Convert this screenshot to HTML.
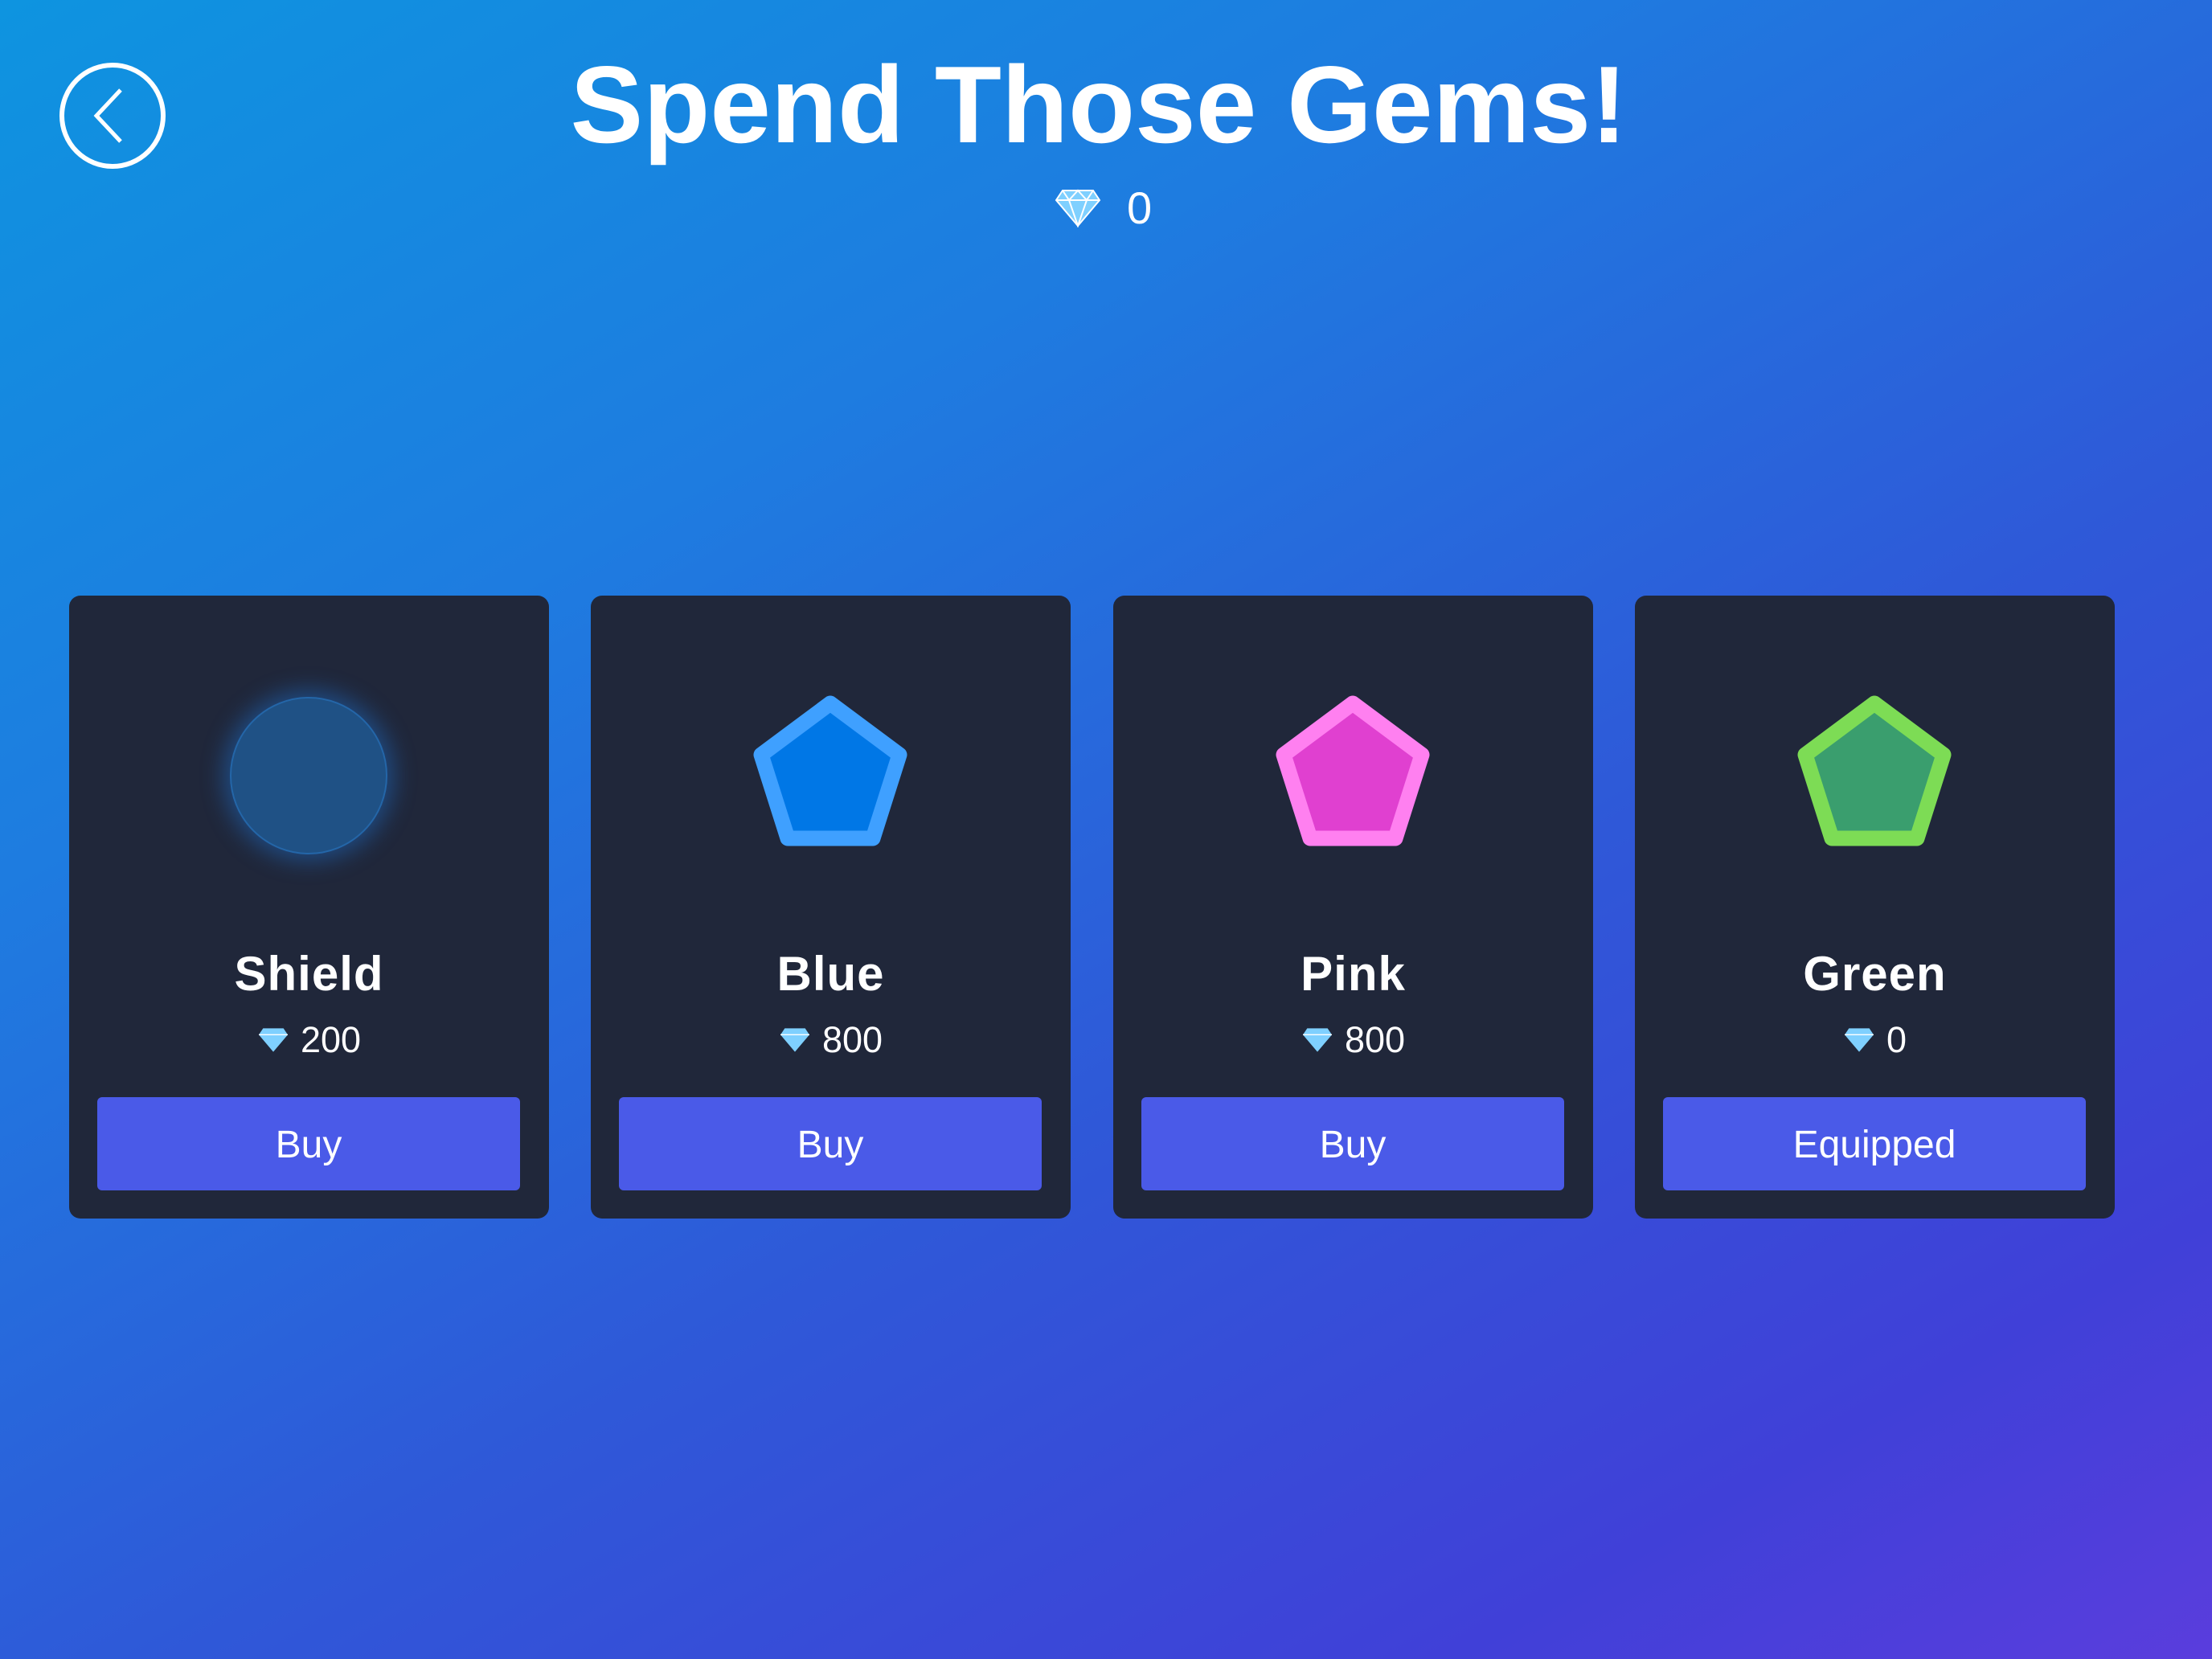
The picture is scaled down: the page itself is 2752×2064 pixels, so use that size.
<!DOCTYPE html>
<html><head><style>
body{margin:0;width:2752px;height:2064px;overflow:hidden;font-family:"Liberation Sans",sans-serif;
background:linear-gradient(150deg,#0e94e0 0%,#1e7ce0 30%,#2f58d8 60%,#4040d8 85%,#5a3ddd 100%);position:relative;color:#fff}
.back{position:absolute;left:74px;top:78px;width:120px;height:120px;border:6px solid #fff;border-radius:50%}
h1{position:absolute;left:0;width:2734px;top:52px;margin:0;text-align:center;font-size:136px;font-weight:bold;letter-spacing:0}
.count{position:absolute;left:1312px;top:226px;font-size:56px;display:flex;align-items:center;gap:32px}
.card{position:absolute;top:741px;width:597px;height:775px;background:#20273a;border-radius:14px}
.name{position:absolute;width:597px;text-align:center;font-size:60px;font-weight:bold;letter-spacing:1px}
.price{position:absolute;width:597px;display:flex;justify-content:center;align-items:center;gap:14px;font-size:45px}
.btn{position:absolute;left:35px;top:624px;width:526px;height:116px;background:#4a5ae8;border-radius:6px;text-align:center;line-height:120px;font-size:48px}
.shape{position:absolute;left:198px;top:120px}
</style></head><body>
<div class="back"><svg width="120" height="120" viewBox="0 0 120 120" style="position:absolute;left:0;top:0"><path d="M70 28 L40 60 L70 92" fill="none" stroke="#fff" stroke-width="5"/></svg></div>
<h1>Spend Those Gems!</h1>
<div class="count"><svg width="58" height="48" viewBox="0 0 58 48"><path d="M10 2H48L56 14L29 46L2 14Z" fill="#7fd0ff" stroke="#fff" stroke-width="2"/><path d="M2 14H56M10 2L18 14L29 46L40 14L48 2M18 14L29 2L40 14" fill="none" stroke="#fff" stroke-width="2"/></svg><span>0</span></div>

<div class="card" style="left:86px">
<div style="position:absolute;left:200px;top:126px;width:192px;height:192px;border-radius:50%;background:#1f5185;border:2px solid #2466a8;box-shadow:0 0 28px 8px rgba(30,120,220,.45)"></div>
<div class="name" style="top:436px">Shield</div>
<div class="price" style="top:527px"><svg width="40" height="32" viewBox="0 0 58 48"><path d="M10 2H48L56 14L29 46L2 14Z" fill="#7fd0ff"/><path d="M2 14H56" stroke="#fff" stroke-width="2"/></svg><span>200</span></div>
<div class="btn">Buy</div></div>

<div class="card" style="left:735px">
<svg class="shape" width="200" height="200" viewBox="0 0 200 200"><path d="M100 14L186 78L153 182H47L14 78Z" fill="#0077e6" stroke="#3fa0ff" stroke-width="19" stroke-linejoin="round"/></svg>
<div class="name" style="top:436px">Blue</div>
<div class="price" style="top:527px"><svg width="40" height="32" viewBox="0 0 58 48"><path d="M10 2H48L56 14L29 46L2 14Z" fill="#7fd0ff"/><path d="M2 14H56" stroke="#fff" stroke-width="2"/></svg><span>800</span></div>
<div class="btn">Buy</div></div>

<div class="card" style="left:1385px">
<svg class="shape" width="200" height="200" viewBox="0 0 200 200"><path d="M100 14L186 78L153 182H47L14 78Z" fill="#e040d0" stroke="#ff80f0" stroke-width="19" stroke-linejoin="round"/></svg>
<div class="name" style="top:436px">Pink</div>
<div class="price" style="top:527px"><svg width="40" height="32" viewBox="0 0 58 48"><path d="M10 2H48L56 14L29 46L2 14Z" fill="#7fd0ff"/><path d="M2 14H56" stroke="#fff" stroke-width="2"/></svg><span>800</span></div>
<div class="btn">Buy</div></div>

<div class="card" style="left:2034px">
<svg class="shape" width="200" height="200" viewBox="0 0 200 200"><path d="M100 14L186 78L153 182H47L14 78Z" fill="#3a9e6e" stroke="#7ddc55" stroke-width="19" stroke-linejoin="round"/></svg>
<div class="name" style="top:436px">Green</div>
<div class="price" style="top:527px"><svg width="40" height="32" viewBox="0 0 58 48"><path d="M10 2H48L56 14L29 46L2 14Z" fill="#7fd0ff"/><path d="M2 14H56" stroke="#fff" stroke-width="2"/></svg><span>0</span></div>
<div class="btn">Equipped</div></div>
</body></html>
